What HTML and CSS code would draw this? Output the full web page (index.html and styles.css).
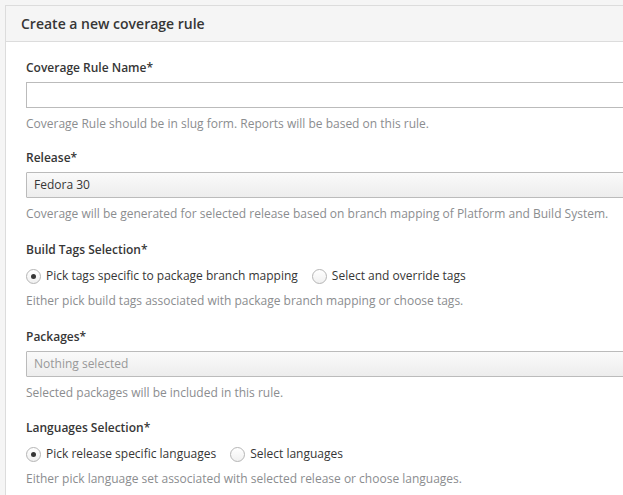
FILE: index.html
```html
<!DOCTYPE html>
<html>
<head>
<meta charset="utf-8">
<link rel="stylesheet" href="styles.css">
</head>
<body>
<div class="panel">
  <div class="panel-heading"><h3 class="panel-title">Create a new coverage rule</h3></div>
  <div class="panel-body">
    <div class="form-group">
      <label class="control-label">Coverage Rule Name*</label>
      <div class="text-input"></div>
      <p class="help">Coverage Rule should be in slug form. Reports will be based on this rule.</p>
    </div>
    <div class="form-group">
      <label class="control-label">Release*</label>
      <div class="select">Fedora 30</div>
      <p class="help">Coverage will be generated for selected release based on branch mapping of Platform and Build System.</p>
    </div>
    <div class="form-group radio-group">
      <label class="control-label">Build Tags Selection*</label>
      <div class="radios">
        <span class="radio"><span class="dot checked"></span>Pick tags specific to package branch mapping</span>
        <span class="radio"><span class="dot"></span>Select and override tags</span>
      </div>
      <p class="help">Either pick build tags associated with package branch mapping or choose tags.</p>
    </div>
    <div class="form-group">
      <label class="control-label">Packages*</label>
      <div class="select placeholder">Nothing selected</div>
      <p class="help">Selected packages will be included in this rule.</p>
    </div>
    <div class="form-group radio-group">
      <label class="control-label">Languages Selection*</label>
      <div class="radios">
        <span class="radio"><span class="dot checked"></span>Pick release specific languages</span>
        <span class="radio"><span class="dot"></span>Select languages</span>
      </div>
      <p class="help">Either pick language set associated with selected release or choose languages.</p>
    </div>
  </div>
</div>
</body>
</html>
```
FILE: styles.css
```css
html, body {
  margin: 0;
  padding: 0;
  overflow: hidden;
  background: #f5f5f5;
}
body {
  padding: 5px 0 0 5px;
  font-family: "Open Sans", "Liberation Sans", sans-serif;
  font-size: 12px;
  line-height: 20px;
  color: #363636;
}
.panel {
  width: 760px;
  background: #fff;
  border: 1px solid #dcdcdc;
  height: 600px;
}
.panel-heading {
  background: #f5f5f5;
  border-bottom: 1px solid #dcdcdc;
  padding: 10px 15px;
}
.panel-title {
  margin: 0;
  font-size: 14px;
  font-weight: 600;
  line-height: 15px;
}
.panel-body {
  padding: 16px 20px;
}
.form-group {
  margin-bottom: 15px;
}
.form-group:first-child {
  margin-bottom: 14px;
}
.form-group:nth-child(2) {
  margin-bottom: 16px;
}
.form-group.radio-group {
  margin-bottom: 16px;
}
.control-label {
  display: block;
  font-weight: 600;
  margin-bottom: 4px;
}
.text-input {
  height: 24px;
  border: 1px solid #bbb;
  background: #fff;
}
.select {
  height: 24px;
  border: 1px solid #bbb;
  border-radius: 1px;
  background: linear-gradient(to bottom, #fafafa, #ededed);
  padding: 0 7px;
  line-height: 24px;
  color: #363636;
}
.select.placeholder {
  color: #999;
}
.radios {
  display: flex;
  gap: 14px;
  padding-top: 2px;
}
.radio {
  display: flex;
  align-items: center;
  gap: 5px;
}
.dot {
  box-sizing: border-box;
  width: 15px;
  height: 15px;
  border-radius: 50%;
  border: 1px solid #b5b5b5;
  background: linear-gradient(to bottom, #fff, #f0f0f0);
  display: flex;
  align-items: center;
  justify-content: center;
}
.dot.checked::after {
  content: "";
  width: 5px;
  height: 5px;
  border-radius: 50%;
  background: #363636;
}
.help {
  margin: 6px 0 0;
  color: #8b8d8f;
}
.radio-group .help {
  margin-top: 5px;
}
```
